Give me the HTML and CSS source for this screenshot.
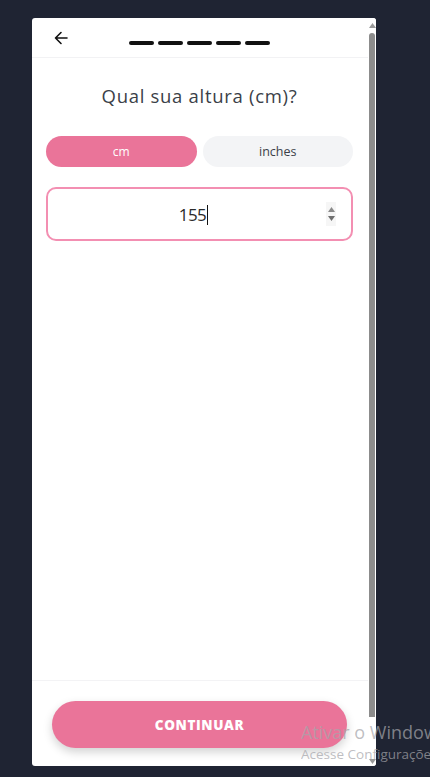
FILE: index.html
```html
<!DOCTYPE html>
<html lang="pt">
<head>
<meta charset="utf-8">
<title>Altura</title>
<link rel="stylesheet" href="styles.css">
</head>
<body>
<div class="screen">
  <div class="panel">
    <div class="content">
      <header class="topbar">
        <button class="back" aria-label="Voltar">
          <svg width="14" height="14" viewBox="0 0 14 14"><path d="M13 7H1.5M7 1.5L1.5 7L7 12.5" fill="none" stroke="#111" stroke-width="1.6" stroke-linecap="round" stroke-linejoin="round"/></svg>
        </button>
        <div class="steps">
          <span class="step"></span><span class="step"></span><span class="step"></span><span class="step"></span><span class="step"></span>
        </div>
      </header>
      <main class="body">
        <h1 class="title">Qual sua altura (cm)?</h1>
        <div class="units">
          <button class="unit active">cm</button>
          <button class="unit">inches</button>
        </div>
        <div class="field">
          <span class="value">155<span class="caret"></span></span>
          <span class="spin">
            <svg width="7" height="5" viewBox="0 0 7 5"><path d="M0 5L3.5 0L7 5Z" fill="#8a8a8a"/></svg>
            <svg width="7" height="5" viewBox="0 0 7 5"><path d="M0 0L3.5 5L7 0Z" fill="#6f6f6f"/></svg>
          </span>
        </div>
      </main>
      <footer class="footer">
        <button class="cta">CONTINUAR</button>
      </footer>
    </div>
    <div class="scrollbar">
      <svg class="arr" width="7" height="5" viewBox="0 0 7 5"><path d="M0 5L3.5 0L7 5Z" fill="#9a9a9a"/></svg>
      <div class="thumb"></div>
      <div class="track"></div>
      <svg class="arr" width="7" height="5" viewBox="0 0 7 5"><path d="M0 0L3.5 5L7 0Z" fill="#9a9a9a"/></svg>
    </div>
  </div>
  <div class="watermark">
    <div class="wm1">Ativar o Windows</div>
    <div class="wm2">Acesse Configurações</div>
  </div>
</div>
</body>
</html>
```

FILE: styles.css
```css
* { box-sizing: border-box; }
html, body { margin: 0; padding: 0; }
body {
  background: #1f2433;
  width: 430px;
  height: 777px;
  overflow: hidden;
  font-family: "Open Sans", "Liberation Sans", sans-serif;
}
.screen {
  position: relative;
  width: 430px;
  height: 777px;
  padding: 18px 0 0 32px;
}
.panel {
  width: 344px;
  height: 748px;
  background: #fff;
  border-radius: 3px;
  display: flex;
  overflow: hidden;
}
.content {
  flex: 1;
  display: flex;
  flex-direction: column;
}
.topbar {
  height: 40px;
  border-bottom: 1px solid #f2f2f4;
  display: flex;
  align-items: flex-start;
  padding-left: 22px;
}
.back {
  border: 0;
  background: none;
  padding: 0;
  margin-top: 13px;
  width: 14px;
  height: 14px;
  display: flex;
}
.steps {
  display: flex;
  gap: 4px;
  margin-top: 23px;
  margin-left: 61px;
}
.step {
  width: 25px;
  height: 4px;
  border-radius: 2px;
  background: #111;
}
.body {
  flex: 1;
  padding: 0 15px 0 14px;
  display: flex;
  flex-direction: column;
}
.title {
  margin: 26px 0 0;
  text-align: center;
  font-size: 18.5px;
  font-weight: 400;
  color: #3b3f48;
  line-height: 24px;
  letter-spacing: 0.7px;
}
.units {
  margin-top: 28px;
  display: flex;
  gap: 6px;
}
.unit {
  flex: 1;
  height: 31px;
  border: 0;
  border-radius: 16px;
  background: #f3f4f6;
  color: #3b3f48;
  font-family: "Open Sans", "Liberation Sans", sans-serif;
  font-size: 12.5px;
  padding: 0;
}
.unit.active {
  background: #ea7499;
  color: #fff;
  font-size: 12px;
}
.field {
  margin-top: 20px;
  height: 54px;
  border: 2px solid #f38fb2;
  border-radius: 10px;
  display: flex;
  align-items: center;
  position: relative;
}
.value {
  flex: 1;
  text-align: center;
  font-size: 17px;
  color: #2a2a2a;
  letter-spacing: -0.6px;
  padding-right: 12px;
}
.caret {
  display: inline-block;
  width: 1px;
  height: 20px;
  background: #111;
  vertical-align: -4px;
  margin-left: 1px;
}
.spin {
  position: absolute;
  right: 15px;
  top: 13px;
  width: 10px;
  height: 24px;
  background: #f6f6f6;
  display: flex;
  flex-direction: column;
  align-items: center;
  justify-content: center;
  gap: 4px;
}
.footer {
  border-top: 1px solid #f3f3f5;
  padding: 20px 21px 18px 20px;
}
.cta {
  width: 100%;
  height: 47px;
  border: 0;
  border-radius: 24px;
  background: #ea7499;
  color: #fff;
  font-family: "Open Sans", "Liberation Sans", sans-serif;
  font-weight: 800;
  font-size: 13.5px;
  letter-spacing: 0.6px;
  box-shadow: 0 4px 10px rgba(0,0,0,0.18);
}
.scrollbar {
  width: 8px;
  display: flex;
  flex-direction: column;
  align-items: center;
  background: #fff;
  padding: 5px 0 2px;
}
.arr { flex: none; }
.thumb {
  margin-top: 5px;
  width: 6px;
  height: 684px;
  background: #8c8c8c;
  border-radius: 3px 3px 0 0;
}
.track { flex: 1; }
.watermark {
  position: absolute;
  left: 301px;
  top: 721px;
  width: 129px;
  overflow: hidden;
  white-space: nowrap;
  color: rgba(165,165,170,0.72);
  font-family: "Open Sans", "Liberation Sans", sans-serif;
}
.wm1 { font-size: 18px; line-height: 22px; }
.wm2 { font-size: 13.5px; line-height: 20px; margin-top: 1px; }
```
